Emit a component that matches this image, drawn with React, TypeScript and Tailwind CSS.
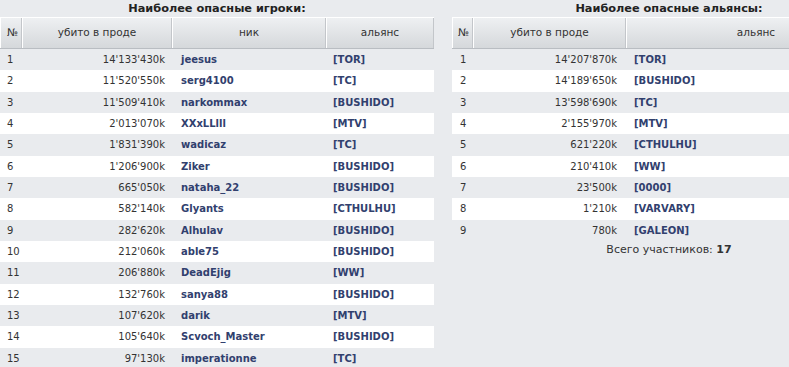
import React from "react";

const players: [string, string, string][] = [
  ["14'133'430k", "jeesus", "[TOR]"],
  ["11'520'550k", "serg4100", "[TC]"],
  ["11'509'410k", "narkommax", "[BUSHIDO]"],
  ["2'013'070k", "XXxLLlll", "[MTV]"],
  ["1'831'390k", "wadicaz", "[TC]"],
  ["1'206'900k", "Ziker", "[BUSHIDO]"],
  ["665'050k", "nataha_22", "[BUSHIDO]"],
  ["582'140k", "Glyants", "[CTHULHU]"],
  ["282'620k", "Alhulav", "[BUSHIDO]"],
  ["212'060k", "able75", "[BUSHIDO]"],
  ["206'880k", "DeadEjig", "[WW]"],
  ["132'760k", "sanya88", "[BUSHIDO]"],
  ["107'620k", "darik", "[MTV]"],
  ["105'640k", "Scvoch_Master", "[BUSHIDO]"],
  ["97'130k", "imperationne", "[TC]"],
];

const alliances: [string, string][] = [
  ["14'207'870k", "[TOR]"],
  ["14'189'650k", "[BUSHIDO]"],
  ["13'598'690k", "[TC]"],
  ["2'155'970k", "[MTV]"],
  ["621'220k", "[CTHULHU]"],
  ["210'410k", "[WW]"],
  ["23'500k", "[0000]"],
  ["1'210k", "[VARVARY]"],
  ["780k", "[GALEON]"],
];

const headCell =
  "flex items-center justify-center border-l border-l-white border-r border-r-[#c3c6ca] text-[#333] text-[10.5px]";

export default function App() {
  return (
    <div
      className="w-[789px] h-[367px] overflow-hidden bg-[#e9ebee] text-[10px] text-[#333]"
      style={{ fontFamily: '"DejaVu Sans", Verdana, sans-serif' }}
    >
      <div className="flex gap-[18px] w-[886px]">
        {/* Players */}
        <div className="w-[434px] flex flex-col">
          <div className="h-[17px] pt-[1px] flex items-center justify-center font-bold text-[11.3px] text-[#222]">
            Наиболее опасные игроки:
          </div>
          <div className="grid grid-cols-[22px_150px_154px_108px] h-[32px] bg-gradient-to-b from-[#eef0f2] to-[#d5d8db] border-t border-t-white border-b border-b-[#b9bdc2]">
            <div className={headCell + " justify-start pl-[6px]"}>№</div>
            <div className={headCell}>убито в проде</div>
            <div className={headCell}>ник</div>
            <div className={headCell}>альянс</div>
          </div>
          <div className="flex flex-col">
            {players.map(([kills, nick, ally], i) => (
              <div
                key={i}
                className={
                  "grid grid-cols-[22px_150px_154px_108px] h-[21.33px] items-center " +
                  (i % 2 === 1 ? "bg-white" : "")
                }
              >
                <div className="pl-[7px]">{i + 1}</div>
                <div className="text-right pr-[7px]">{kills}</div>
                <div className="pl-[9px] font-bold text-[#31406e]">{nick}</div>
                <div className="pl-[7px] font-bold text-[#31406e]">{ally}</div>
              </div>
            ))}
          </div>
        </div>

        {/* Alliances */}
        <div className="w-[434px] flex flex-col">
          <div className="h-[17px] pt-[1px] flex items-center justify-center font-bold text-[11.3px] text-[#222]">
            Наиболее опасные альянсы:
          </div>
          <div className="grid grid-cols-[21px_153px_260px] h-[32px] bg-gradient-to-b from-[#eef0f2] to-[#d5d8db] border-t border-t-white border-b border-b-[#b9bdc2]">
            <div className={headCell + " justify-start pl-[5px]"}>№</div>
            <div className={headCell}>убито в проде</div>
            <div className={headCell}>альянс</div>
          </div>
          <div className="flex flex-col">
            {alliances.map(([kills, ally], i) => (
              <div
                key={i}
                className={
                  "grid grid-cols-[21px_153px_260px] h-[21.33px] items-center " +
                  (i % 2 === 1 ? "bg-white" : "")
                }
              >
                <div className="pl-[8px]">{i + 1}</div>
                <div className="text-right pr-[9px]">{kills}</div>
                <div className="pl-[8px] font-bold text-[#31406e]">{ally}</div>
              </div>
            ))}
          </div>
          <div className="h-[18px] flex items-center justify-center text-[11px]">
            Всего участников:&nbsp;<span className="font-bold">17</span>
          </div>
        </div>
      </div>
    </div>
  );
}
